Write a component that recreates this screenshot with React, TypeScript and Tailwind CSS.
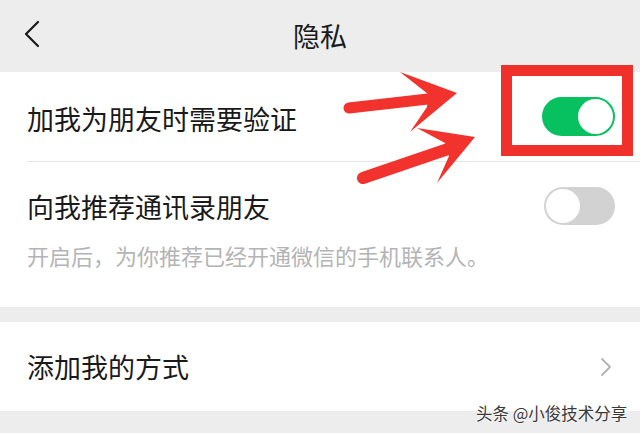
import React from "react";

function Toggle({ on }: { on: boolean }) {
  if (on) {
    return (
      <div className="w-[73px] h-[39px] rounded-full bg-[#07c160] flex items-center justify-end pr-[2px]">
        <div className="w-[35px] h-[35px] rounded-full bg-white" />
      </div>
    );
  }
  return (
    <div className="w-[71px] h-[38px] rounded-full bg-[#d2d2d2] flex items-center pl-[2px]">
      <div className="w-[34px] h-[34px] rounded-full bg-white" />
    </div>
  );
}

export default function App() {
  const font = { fontFamily: '"Noto Sans CJK SC", "Noto Sans", sans-serif' };
  return (
    <div className="relative w-[640px] h-[433px] overflow-hidden bg-[#ededed]" style={font}>
      {/* Header */}
      <div className="relative h-[72px] flex items-center justify-center">
        <svg className="absolute left-[23px] top-[20px]" width="18" height="28" viewBox="0 0 18 28">
          <path d="M15 2 L3 14 L15 26" fill="none" stroke="#1a1a1a" strokeWidth="2.2" strokeLinecap="round" strokeLinejoin="round" />
        </svg>
        <div className="text-[27px] leading-none text-[#1a1a1a] -mt-[2px]">隐私</div>
      </div>

      {/* Section 1 */}
      <div className="bg-white">
        <div className="h-[89px] flex items-center justify-between pl-[27px] pr-[25px]">
          <div className="text-[27px] leading-none text-[#1a1a1a] mt-[3px]">加我为朋友时需要验证</div>
          <Toggle on />
        </div>
        <div className="ml-[27px] h-px bg-[#e6e6e6]" />
        <div className="pt-[25px] pb-[41px] pl-[27px] pr-[25px]">
          <div className="flex items-center justify-between">
            <div className="text-[27px] leading-none text-[#1a1a1a]">向我推荐通讯录朋友</div>
            <Toggle on={false} />
          </div>
          <div className="mt-[19px] text-[22px] leading-[22px] text-[#b4b4b4]">开启后，为你推荐已经开通微信的手机联系人。</div>
        </div>
      </div>

      <div className="h-[15px]" />

      {/* Section 2 */}
      <div className="bg-white h-[89px] flex items-center justify-between pl-[27px] pr-[28px]">
        <div className="text-[27px] leading-none text-[#1a1a1a]">添加我的方式</div>
        <svg width="12" height="20" viewBox="0 0 12 20">
          <path d="M2 2 L10 10 L2 18" fill="none" stroke="#b2b2b2" strokeWidth="1.8" strokeLinecap="round" strokeLinejoin="round" />
        </svg>
      </div>

      {/* Red highlight box */}
      <div className="absolute left-[501px] top-[65px] w-[132px] h-[91px] border-[11px] border-[#f0302a]" />

      {/* Arrows */}
      <svg className="absolute left-0 top-0 pointer-events-none" width="640" height="433" viewBox="0 0 640 433">
        <line x1="349" y1="108" x2="428" y2="99" stroke="#f2322c" strokeWidth="11" strokeLinecap="round" />
        <polygon points="400,72 457,93 410,132 427,107 428,94" fill="#f2322c" />
        <line x1="363" y1="178" x2="448" y2="149" stroke="#f2322c" strokeWidth="12" strokeLinecap="round" />
        <polygon points="417,128 475,137 437,183 449,156 445,143" fill="#f2322c" />
      </svg>

      {/* Watermark */}
      <div
        className="absolute left-[476px] top-[402px] text-[16.5px] leading-[22px] text-[#3a3a3a] whitespace-nowrap"
        style={{ textShadow: "0 0 2px #fff, 0 0 2px #fff" }}
      >
        头条 @小俊技术分享
      </div>
    </div>
  );
}
